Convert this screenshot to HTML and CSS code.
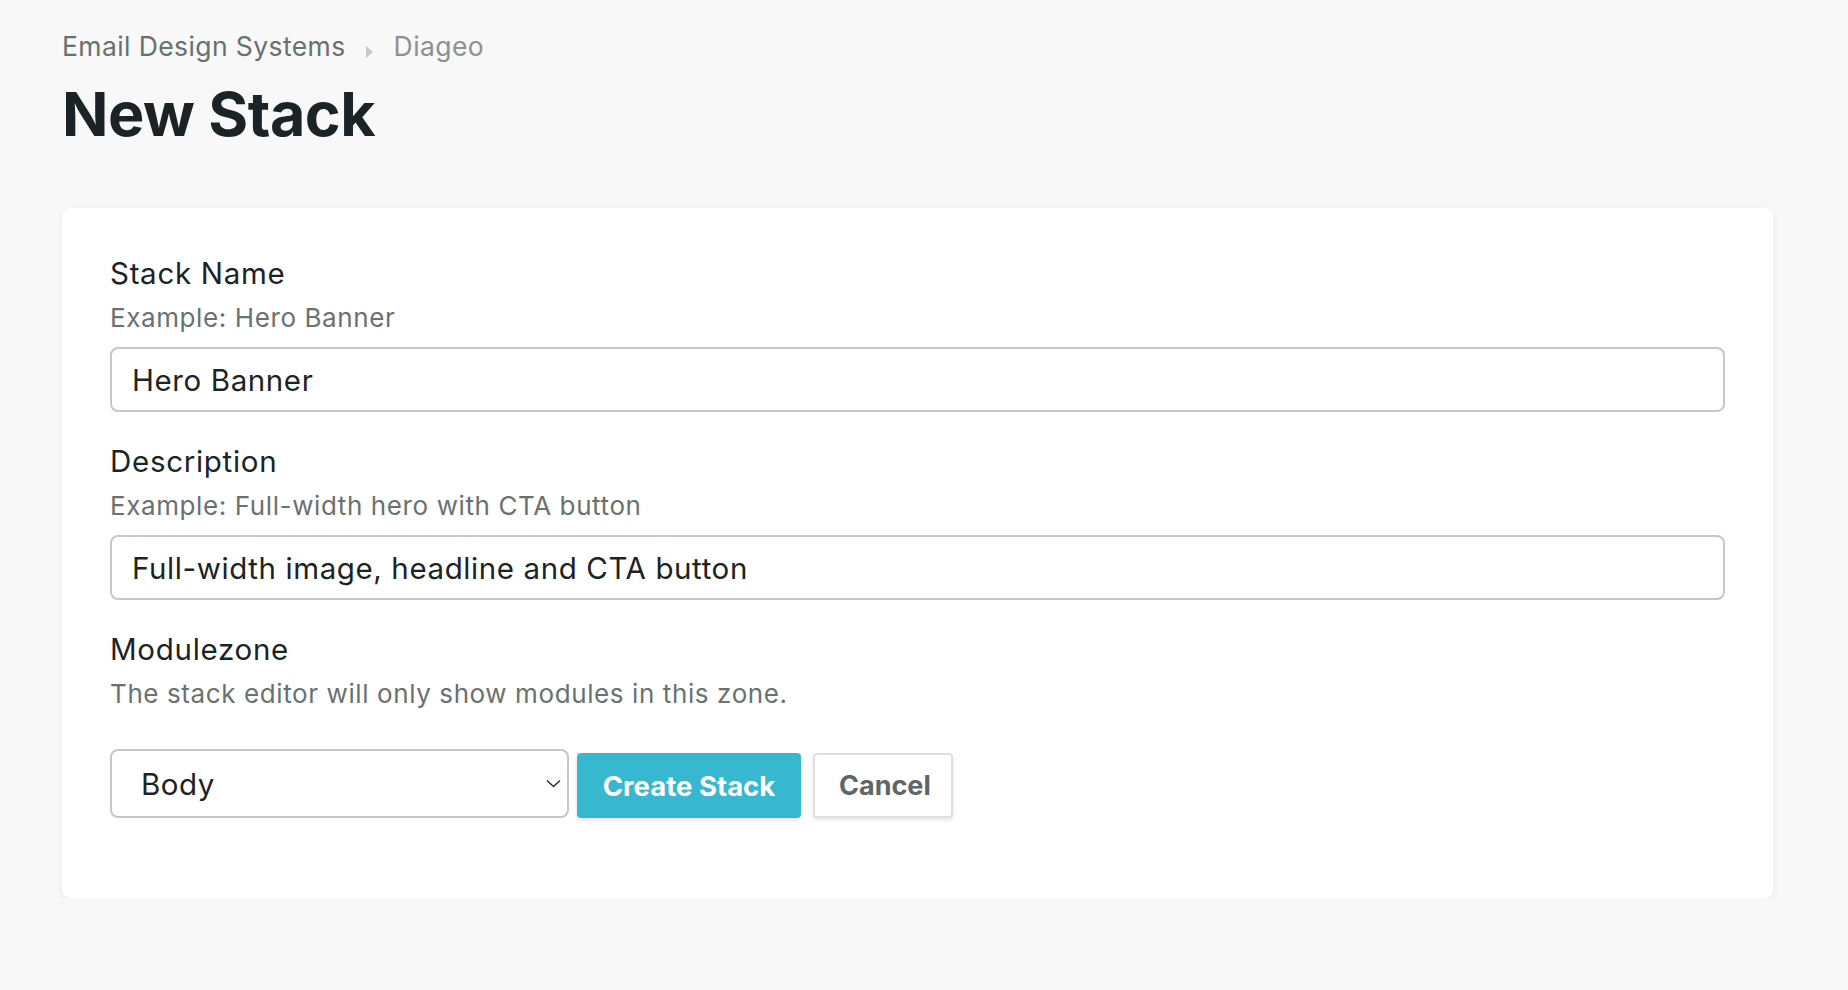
FILE: index.html
```html
<!DOCTYPE html>
<html lang="en">
<head>
    <meta charset="UTF-8">
    <meta name="viewport" content="width=device-width, initial-scale=1.0">
    <title>New Stack</title>
    <link rel="stylesheet" href="styles.css">
</head>
<body>
    <div class="page">
        <nav class="breadcrumb">
            <a href="#" class="crumb-link">Email Design Systems</a>
            <span class="crumb-sep"></span>
            <span class="crumb-current">Diageo</span>
        </nav>
        <h1 class="page-title">New Stack</h1>

        <div class="card">
            <form class="stack-form">
                <div class="field">
                    <label for="stack-name" class="field-label">Stack Name</label>
                    <div class="field-help">Example: Hero Banner</div>
                    <input type="text" id="stack-name" class="text-input" value="Hero Banner">
                </div>

                <div class="field">
                    <label for="stack-desc" class="field-label">Description</label>
                    <div class="field-help">Example: Full-width hero with CTA button</div>
                    <input type="text" id="stack-desc" class="text-input" value="Full-width image, headline and CTA button">
                </div>

                <div class="field">
                    <label for="modulezone" class="field-label">Modulezone</label>
                    <div class="field-help">The stack editor will only show modules in this zone.</div>
                </div>

                <div class="actions">
                    <div class="select-wrap">
                        <select id="modulezone" class="select-input">
                            <option>Body</option>
                            <option>Header</option>
                            <option>Footer</option>
                        </select>
                        <svg class="select-chevron" width="15" height="9" viewBox="0 0 15 9">
                            <path d="M1 1.5 L7.5 7.5 L14 1.5" fill="none" stroke="#2a3134" stroke-width="1.5"/>
                        </svg>
                    </div>
                    <button type="submit" class="btn btn-primary">Create Stack</button>
                    <button type="button" class="btn btn-default">Cancel</button>
                </div>
            </form>
        </div>
    </div>
</body>
</html>
```
FILE: styles.css
```css
body {
    margin: 0;
    background-color: #f8f8f8;
    font-family: Inter, "Noto Sans", sans-serif;
    color: #1b2326;
}

.page {
    padding: 26px 75px 0 62px;
}

.breadcrumb {
    display: flex;
    align-items: center;
    font-size: 26.5px;
    line-height: 40px;
    letter-spacing: 0.4px;
}

.crumb-link {
    color: #687070;
    text-decoration: none;
}

.crumb-sep {
    width: 0;
    height: 0;
    margin: 12px 21px 0 20px;
    border-top: 6px solid transparent;
    border-bottom: 6px solid transparent;
    border-left: 7px solid #c6caca;
}

.crumb-current {
    color: #8b9191;
}

.page-title {
    margin: 11px 0 0 0;
    font-size: 61px;
    line-height: 74px;
    font-weight: 700;
    letter-spacing: -0.5px;
    color: #1b2326;
}

.card {
    margin-top: 57px;
    padding: 44px 48px 80px;
    background-color: white;
    border-radius: 8px;
    box-shadow: 0 2px 6px rgba(0, 0, 0, 0.07);
}

.field {
    margin-bottom: 28px;
}

.field-label {
    display: block;
    font-size: 29.5px;
    line-height: 42px;
    letter-spacing: 0.7px;
    color: #1b2326;
}

.field-help {
    margin-top: 6px;
    margin-bottom: 11px;
    font-size: 26px;
    line-height: 36px;
    letter-spacing: 0.6px;
    color: #6a7171;
}

.text-input {
    display: block;
    box-sizing: border-box;
    width: 100%;
    height: 65px;
    padding: 0 20px;
    border: 2px solid #c4c8c8;
    border-radius: 8px;
    font-family: inherit;
    font-size: 29.5px;
    letter-spacing: 0.6px;
    color: #1b2326;
    background-color: white;
}

.actions {
    display: flex;
    align-items: flex-end;
    margin-top: 37px;
}

.select-wrap {
    position: relative;
    width: 459px;
    margin-right: 8px;
}

.select-input {
    appearance: none;
    -webkit-appearance: none;
    display: block;
    box-sizing: border-box;
    width: 100%;
    height: 69px;
    padding: 0 40px 0 29px;
    border: 2px solid #c4c8c8;
    border-radius: 8px;
    background-color: white;
    font-family: inherit;
    font-size: 29.5px;
    letter-spacing: 0.5px;
    color: #1b2326;
}

.select-chevron {
    position: absolute;
    right: 8px;
    top: 30px;
}

.btn {
    box-sizing: border-box;
    height: 65px;
    padding: 0 24px;
    border-radius: 4px;
    font-family: inherit;
    font-size: 27.5px;
    font-weight: 700;
    cursor: pointer;
}

.btn-primary {
    width: 224px;
    margin-right: 12px;
    border: none;
    background-color: #37b7d0;
    color: white;
    box-shadow: 0 2px 5px rgba(0, 0, 0, 0.12);
}

.btn-default {
    width: 140px;
    border: 2px solid #dee0e0;
    background-color: white;
    color: #5e6668;
    font-size: 27px;
    box-shadow: 0 2px 4px rgba(0, 0, 0, 0.1);
}
```
